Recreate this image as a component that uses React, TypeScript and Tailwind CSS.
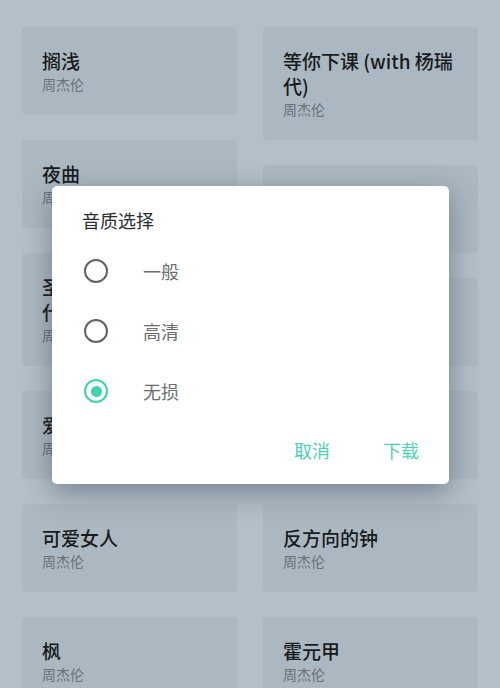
const left = [
  { title: "搁浅", artist: "周杰伦" },
  { title: "夜曲", artist: "周杰伦" },
  { title: "圣诞星 (with 杨瑞代)", artist: "周杰伦" },
  { title: "爱在西元前", artist: "周杰伦" },
  { title: "可爱女人", artist: "周杰伦" },
  { title: "枫", artist: "周杰伦" },
];

const right = [
  { title: "等你下课 (with 杨瑞代)", artist: "周杰伦" },
  { title: "最伟大的作品", artist: "周杰伦" },
  { title: "晴天", artist: "周杰伦" },
  { title: "稻香", artist: "周杰伦" },
  { title: "反方向的钟", artist: "周杰伦" },
  { title: "霍元甲", artist: "周杰伦" },
];

const options = ["一般", "高清", "无损"];

function SongCard({ title, artist }: { title: string; artist: string }) {
  return (
    <div className="rounded-[4px] bg-[#acb8c1] pl-5 pr-[23px] pt-[21px] pb-[20px]">
      <div className="text-[19px] leading-[25px] font-medium text-[#181b1e] break-words">{title}</div>
      <div className="text-[14px] leading-[22px] text-[#66717a]">{artist}</div>
    </div>
  );
}

function Radio({ checked }: { checked: boolean }) {
  return checked ? (
    <span className="w-6 h-6 rounded-full border-[2.5px] border-[#3fd3b2] flex items-center justify-center">
      <span className="w-[11px] h-[11px] rounded-full bg-[#3fd3b2]" />
    </span>
  ) : (
    <span className="w-6 h-6 rounded-full border-[2.5px] border-[#5d6469]" />
  );
}

export default function App() {
  const selected = 2;

  return (
    <div
      className="relative w-[500px] h-[688px] overflow-hidden bg-[#b4bfc8]"
      style={{ fontFamily: '"Noto Sans CJK SC", "Noto Sans", sans-serif' }}
    >
      {/* Song list (two staggered columns) */}
      <div className="flex gap-[26px] px-[22px] pt-[27px]">
        <div className="flex-1 flex flex-col gap-[25px]">
          {left.map((s) => (
            <SongCard key={s.title} {...s} />
          ))}
        </div>
        <div className="flex-1 flex flex-col gap-[25px]">
          {right.map((s) => (
            <SongCard key={s.title} {...s} />
          ))}
        </div>
      </div>

      {/* Quality dialog */}
      <div className="absolute left-[52px] top-[186px] w-[397px] h-[298px] rounded-[5px] bg-white shadow-[0_8px_28px_rgba(40,55,70,0.45)] flex flex-col">
        <div className="pl-[30px] pt-[22px] text-[18px] leading-6 text-[#2a2d30]">音质选择</div>
        <div className="flex flex-col mt-[9px]">
          {options.map((o, i) => (
            <div key={o} className="flex items-center h-[60px] pl-[32px]">
              <Radio checked={i === selected} />
              <span className="ml-[35px] text-[18px] text-[#6b6f73]">{o}</span>
            </div>
          ))}
        </div>
        <div className="flex justify-end gap-[53px] pr-[30px] mt-[16px] text-[18px] text-[#4fcfb4]">
          <button>取消</button>
          <button>下载</button>
        </div>
      </div>
    </div>
  );
}
